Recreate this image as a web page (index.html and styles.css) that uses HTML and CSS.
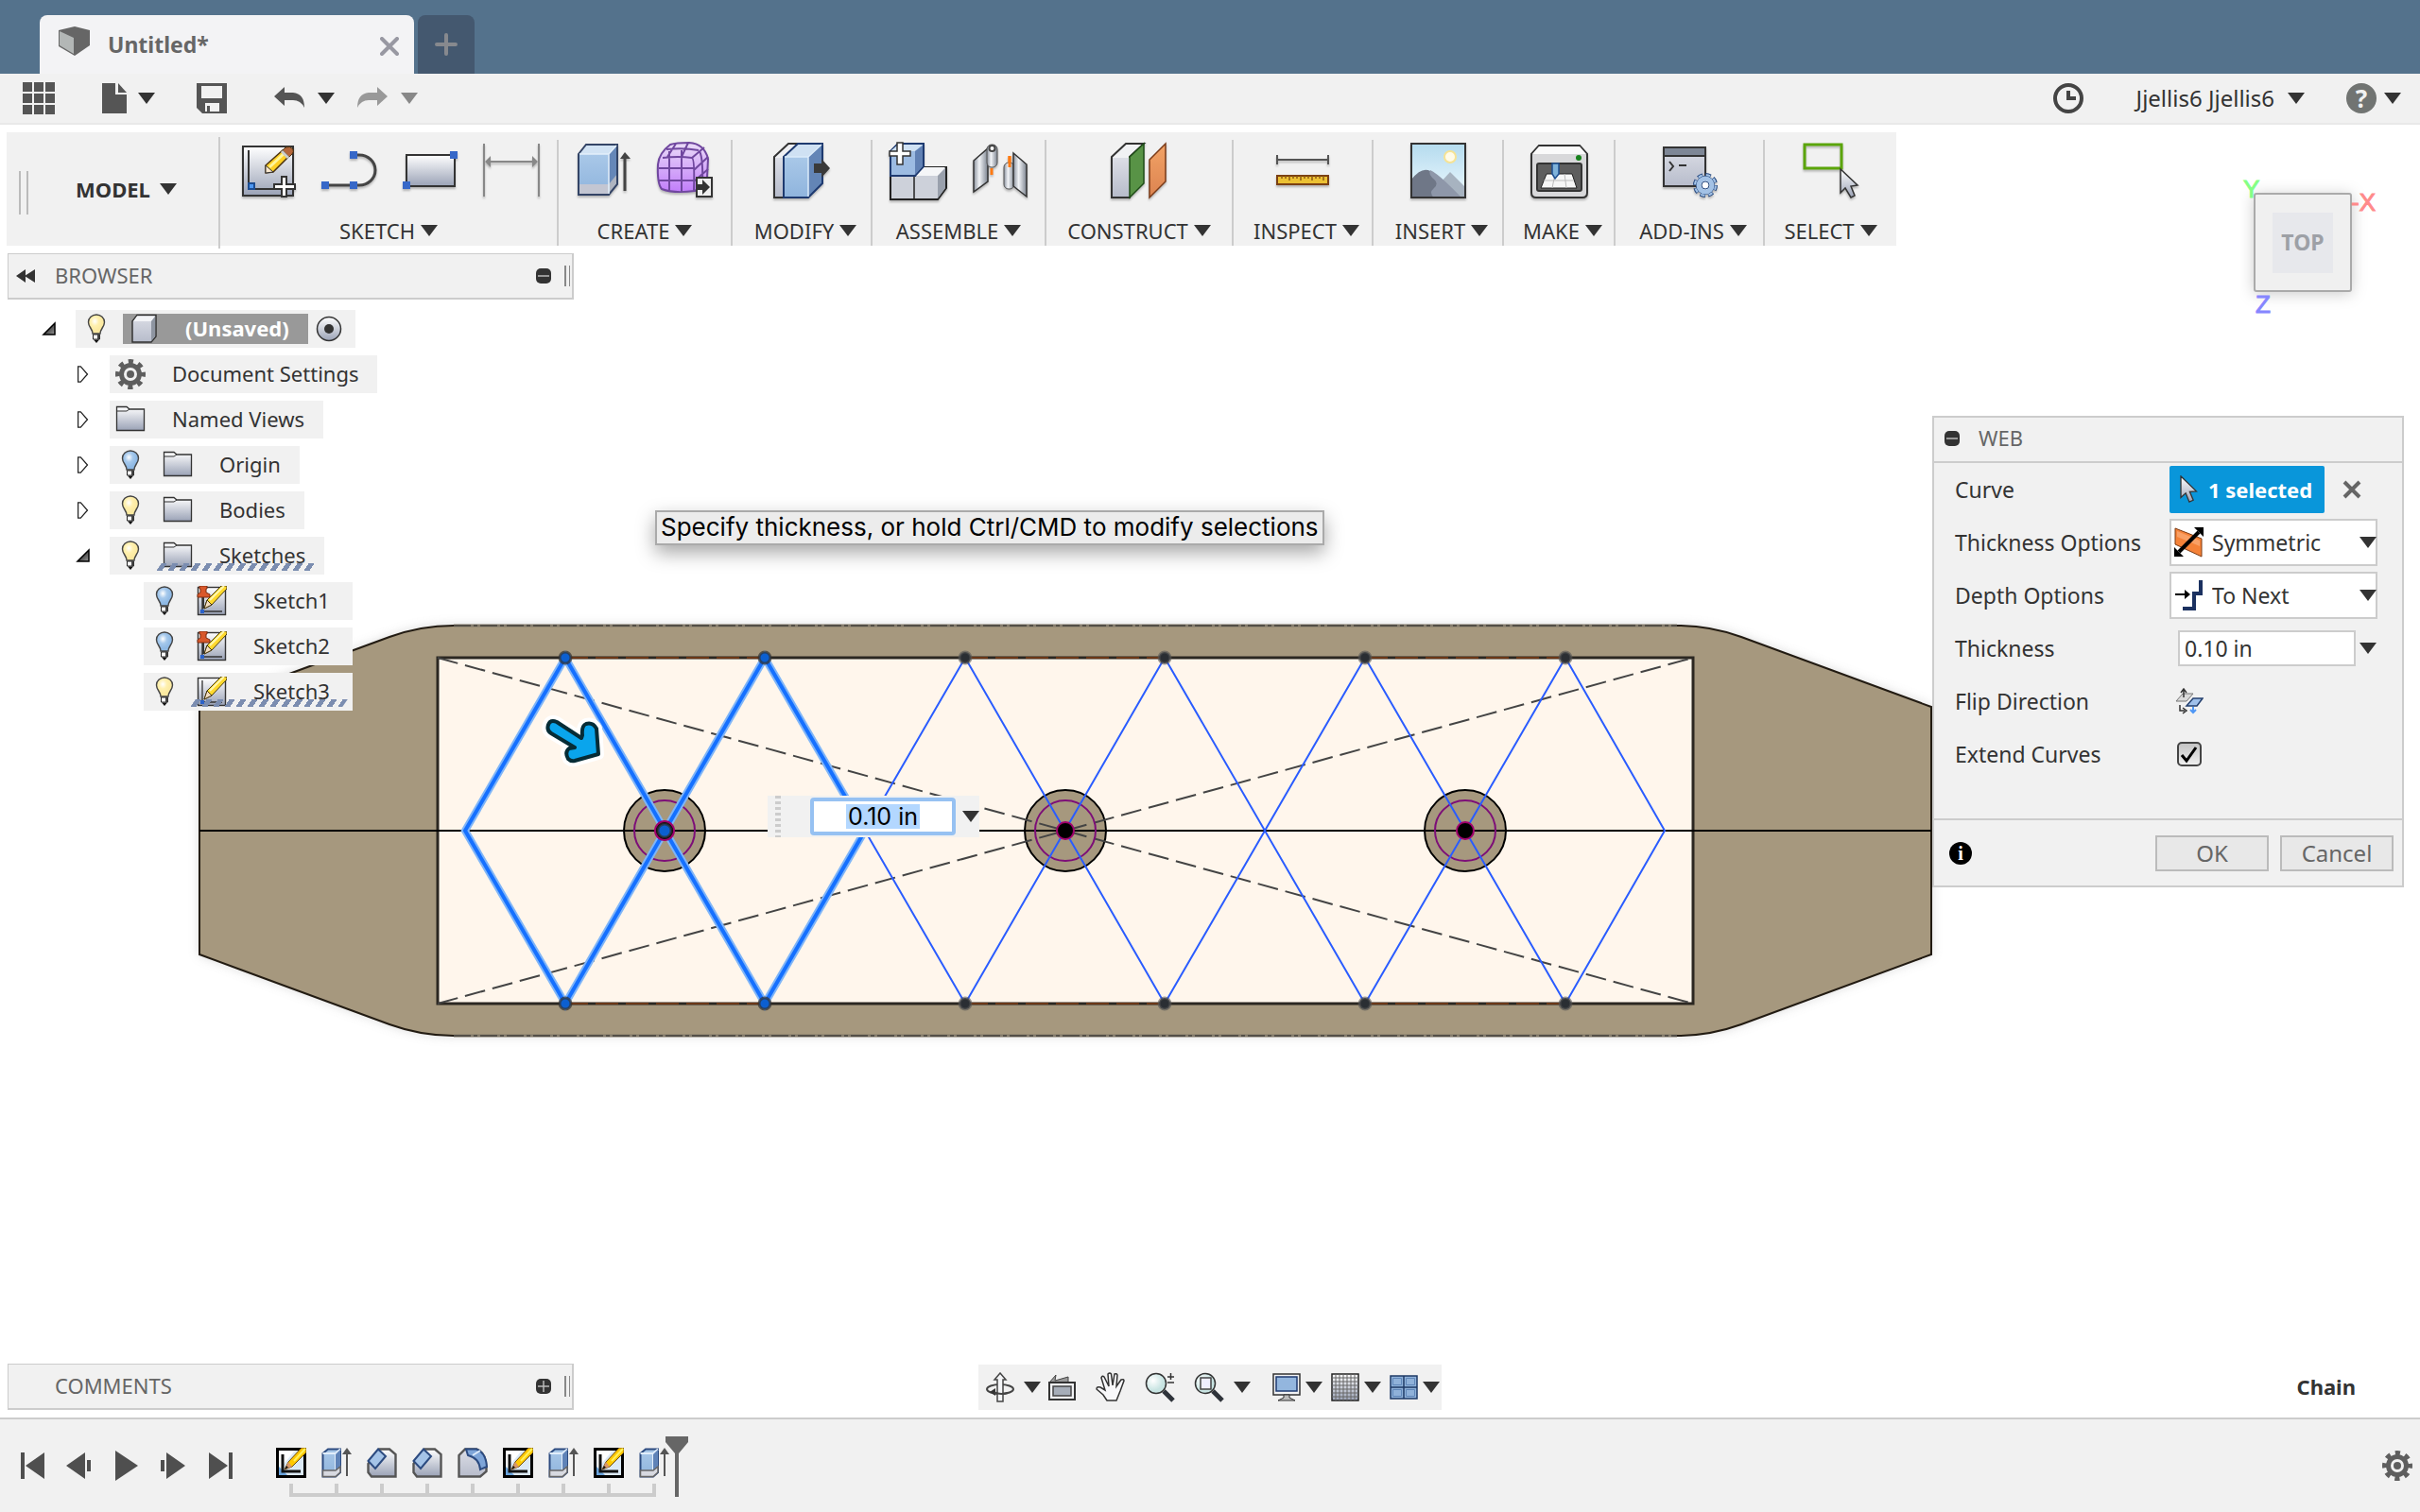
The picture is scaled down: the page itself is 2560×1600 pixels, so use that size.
FILE: index.html
```html
<!DOCTYPE html>
<html lang="en">
<head>
  <meta charset="UTF-8" />
  <meta name="viewport" content="width=device-width, initial-scale=1.0" />
  <title>Untitled*</title>
  <link rel="stylesheet" href="styles.css">
</head>
<body>
  <!-- shared gradients and symbols -->
  <svg class="sprite" aria-hidden="true">
    <defs>
      <linearGradient id="steel" x1="0" y1="0" x2="0" y2="1"><stop offset="0" stop-color="#fff"/><stop offset="1" stop-color="#9aa2b6"/></linearGradient>
      <linearGradient id="silver" x1="0" y1="0" x2="0" y2="1"><stop offset="0" stop-color="#dcdee6"/><stop offset="1" stop-color="#b7bccb"/></linearGradient>
      <linearGradient id="metal" x1="0" y1="0" x2="1" y2="0"><stop offset="0" stop-color="#8b929e"/><stop offset=".4" stop-color="#f2f4f7"/><stop offset="1" stop-color="#7c8490"/></linearGradient>
      <linearGradient id="blue" x1="0" y1="0" x2="0" y2="1"><stop offset="0" stop-color="#a9c8e8"/><stop offset="1" stop-color="#8fb4dd"/></linearGradient>
      <linearGradient id="sky" x1="0" y1="0" x2="0" y2="1"><stop offset="0" stop-color="#b4dbee"/><stop offset="1" stop-color="#eef9ff"/></linearGradient>
      <linearGradient id="violet" x1="0" y1="0" x2="0" y2="1"><stop offset="0" stop-color="#eadcf8"/><stop offset="1" stop-color="#c17dfa"/></linearGradient>
      <linearGradient id="orange" x1="0" y1="0" x2="0" y2="1"><stop offset="0" stop-color="#f2a366"/><stop offset="1" stop-color="#dc8350"/></linearGradient>
      <linearGradient id="corner" x1="0" y1="0" x2="1" y2="1"><stop offset="0" stop-color="#000"/><stop offset="1" stop-color="#999"/></linearGradient>
      <radialGradient id="glowOn" cx=".4" cy=".35"><stop offset="0" stop-color="#fff"/><stop offset=".5" stop-color="#fff0ae"/><stop offset="1" stop-color="#fbe9a0"/></radialGradient>
      <radialGradient id="glowOff" cx=".4" cy=".35"><stop offset="0" stop-color="#fff"/><stop offset=".5" stop-color="#a6c9ec"/><stop offset="1" stop-color="#8fb9e4"/></radialGradient>
      <radialGradient id="lens" cx=".35" cy=".35"><stop offset="0" stop-color="#fff"/><stop offset="1" stop-color="#c8e4e2"/></radialGradient>
    </defs>
    <symbol id="caret" viewBox="0 0 18 12"><path d="M0 0H18L9 12Z" fill="currentColor"/></symbol>
    <symbol id="gear" viewBox="0 0 32 32">
      <circle cx="16" cy="16" r="13.5" fill="none" stroke="#5e5e5e" stroke-width="5" stroke-dasharray="5.2 5.4" stroke-dashoffset="2.6"/>
      <circle cx="16" cy="16" r="9.5" fill="none" stroke="#5e5e5e" stroke-width="5"/>
      <circle cx="16" cy="16" r="4" fill="#5e5e5e"/>
    </symbol>
    <symbol id="bulb-on" viewBox="0 0 32 32">
      <path d="M12 21C12 16 7.500 14 7.500 9A8.500 8 0 0 1 24.500 9C24.500 14 20 16 20 21Z" fill="url(#glowOn)" stroke="#444" stroke-width="1.400"/>
      <path d="M12.500 22H19.500V27H12.500Z" fill="#fff" stroke="#222"/><path d="M17 22H19.500V27H17Z" fill="#444"/><path d="M13 27.500H19L16 31Z" fill="#111"/>
    </symbol>
    <symbol id="bulb-off" viewBox="0 0 32 32">
      <path d="M12 21C12 16 7.500 14 7.500 9A8.500 8 0 0 1 24.500 9C24.500 14 20 16 20 21Z" fill="url(#glowOff)" stroke="#444" stroke-width="1.400"/>
      <path d="M12.500 22H19.500V27H12.500Z" fill="#fff" stroke="#222"/><path d="M17 22H19.500V27H17Z" fill="#444"/><path d="M13 27.500H19L16 31Z" fill="#111"/>
    </symbol>
    <symbol id="folder" viewBox="0 0 32 32">
      <path d="M1.500 6V2.500H12L15 5H30.500V27.500H1.500Z" fill="url(#steel)" stroke="#333" stroke-width="1.300"/>
      <path d="M2 7H12L15 5" fill="none" stroke="#333"/>
    </symbol>
    <symbol id="pencil-page" viewBox="0 0 32 32">
      <rect x="1.500" y="1.500" width="29" height="29" fill="url(#steel)" stroke="#333" stroke-width="1.400"/>
      <path d="M6 4V27H27" fill="none" stroke="#333" stroke-width="1.300"/><rect x="4" y="25" width="4" height="4" fill="#2b62c9"/>
      <path d="M8 24L11 15L26 0H32V3L16 20Z" fill="#ffd92e" stroke="#4a3a10"/><path d="M8 24L11 15L16 20Z" fill="#f3ddc0" stroke="#4a3a10"/><path d="M14 15L29 0" stroke="#fff7b0" stroke-width="2"/>
    </symbol>
    <symbol id="pin-page" viewBox="0 0 32 32">
      <use href="#pencil-page"/>
      <path d="M7 12V24" stroke="#333" stroke-width="2"/>
      <path d="M3 0H11V3H10V7L14 9V12H1V9L4 7V3H3Z" fill="#d9582b" stroke="#7c2c10"/>
    </symbol>
    <symbol id="minus" viewBox="0 0 16 16"><rect width="16" height="16" rx="5" fill="#333"/><path d="M2 8H14" stroke="#bbb" stroke-width="1.500"/></symbol>
    <symbol id="plus" viewBox="0 0 16 16"><rect width="16" height="16" rx="5" fill="#333"/><path d="M2 8H14M8 2V14" stroke="#bbb" stroke-width="1.500"/></symbol>
    <symbol id="closed" viewBox="0 0 14 20"><path d="M1 1H4L12 10L4 19H1Z" fill="#fff" stroke="#222" stroke-width="1.400"/></symbol>
    <symbol id="open" viewBox="-2 -2 18 18"><path d="M1 13L13 1V13Z" fill="url(#corner)" stroke="#000" stroke-width="1.500"/></symbol>
    <symbol id="cursor" viewBox="0 0 20 32"><path d="M1.500 1V25L7 20L11 30L15.500 28L11.500 18.500L19 18Z" fill="url(#steel)" stroke="#333" stroke-width="1.400"/></symbol>
    <symbol id="step-sketch" viewBox="0 0 32 32">
      <rect x="1.500" y="1.500" width="29" height="29" fill="#dbe9f6" stroke="#000" stroke-width="3"/><path d="M3 3H20L4 22Z" fill="#fff"/><path d="M3 20L12 29H3Z" fill="#6aa4dd"/>
      <path d="M7 7V25H26" fill="none" stroke="#111" stroke-width="3"/>
      <path d="M9 23L13 15L27 0H32V5L17 20Z" fill="#ffc800" stroke="#6b4a10"/><path d="M9 23L13 15L17 20Z" fill="#d9976a"/><path d="M9 23L11 19L13 21Z" fill="#111"/><path d="M19 14L31 1" stroke="#fff15c" stroke-width="2"/>
    </symbol>
    <symbol id="step-extrude" viewBox="0 0 32 32">
      <path d="M1.500 6L7 1.500H20V26L15 30.500H1.500Z" fill="url(#blue)" stroke="#2c4b80" stroke-width="2"/><path d="M1.500 6H15V30M15 6L20 1.500" fill="none" stroke="#e2eefb" stroke-width="2"/>
      <path d="M15 7L20 2V22L15 26Z" fill="#5f83b8"/><path d="M1.500 24H15L20 20V26L15 30.500H1.500Z" fill="#d7d9e0" stroke="#666" stroke-width="1.500"/>
      <path d="M27 30V3" stroke="#555" stroke-width="2"/><path d="M22 7L27 0L32 7Z" fill="#555"/>
    </symbol>
    <symbol id="step-chamfer" viewBox="0 0 32 32">
      <path d="M1.500 17L13 1.500H24L30.500 7V30.500H5L1.500 26Z" fill="url(#steel)" stroke="#555" stroke-width="2.400"/>
      <path d="M1.500 14L12 1.500L20 9L9 22Z" fill="#a5c4e8" stroke="#2c4b80" stroke-width="2"/>
    </symbol>
    <symbol id="step-fillet" viewBox="0 0 32 32">
      <path d="M1.500 8L8 1.500H20Q30 5 30.500 20V25L24 30.500H1.500Z" fill="url(#silver)" stroke="#555" stroke-width="2.400"/>
      <path d="M9 1.500H20Q30 5 31 20L24 23Q23 11 11 8Z" fill="#7ea5d8" stroke="#2c4b80" stroke-width="2"/><path d="M16 8L24 3" stroke="#dcebfb" stroke-width="2"/>
    </symbol>
  </svg>

  <header class="tabbar">
    <div class="tab">
      <svg class="tab-cube" width="34" height="32" viewBox="0 0 34 32"><path d="M0 4L17 0L33 4V20L17 31L0 21Z" fill="#666"/><path d="M1 5L16 12V29L1 20Z" fill="#b3b7b6"/></svg>
      <span class="tab-name">Untitled*</span>
      <button class="tab-close" aria-label="Close tab"><svg width="20" height="20" viewBox="0 0 20 20"><path d="M2 2L18 18M18 2L2 18" stroke="#9898a2" stroke-width="4" stroke-linecap="round"/></svg></button>
    </div>
    <button class="tab-new" aria-label="New tab"><svg width="24" height="24" viewBox="0 0 24 24"><path d="M12 2V22M2 12H22" stroke="#87898e" stroke-width="4" stroke-linecap="round"/></svg></button>
  </header>

  <nav class="quickbar">
    <button aria-label="Data panel"><svg width="34" height="34" viewBox="0 0 34 34"><path d="M0 0h10v10H0zM12 0h10v10H12zM24 0h10v10H24zM0 12h10v10H0zM12 12h10v10H12zM24 12h10v10H24zM0 24h10v10H0zM12 24h10v10H12zM24 24h10v10H24z" fill="#555"/></svg></button>
    <button class="quick-file" aria-label="File"><svg width="26" height="32" viewBox="0 0 26 32"><path d="M0 0H14V12H26V32H0Z" fill="#555"/><path d="M17 0L26 10H17Z" fill="#555"/></svg><svg class="caret"><use href="#caret"/></svg></button>
    <button class="quick-save" aria-label="Save"><svg width="32" height="32" viewBox="0 0 32 32"><path d="M0 0H32V32H6L0 26Z" fill="#555"/><path d="M5 3H27V16H5ZM9 21H24V30H9Z" fill="#f1f1f1"/><path d="M11 24H14V30H11Z" fill="#555"/></svg></button>
    <button class="quick-undo" aria-label="Undo"><svg width="32" height="24" viewBox="0 0 32 24"><path d="M0 10L11 0V6H20Q32 7 32 22Q28 14 20 14H11V20Z" fill="#555"/></svg><svg class="caret"><use href="#caret"/></svg></button>
    <button class="quick-redo" aria-label="Redo"><svg width="32" height="24" viewBox="0 0 32 24"><path d="M32 10L21 0V6H12Q0 7 0 22Q4 14 12 14H21V20Z" fill="#999"/></svg><svg class="caret"><use href="#caret"/></svg></button>
    <div class="account">
      <button aria-label="Job status"><svg width="32" height="32" viewBox="0 0 32 32"><circle cx="16" cy="16" r="14" fill="none" stroke="#444" stroke-width="4"/><path d="M16 8V16H24" fill="none" stroke="#444" stroke-width="4"/></svg></button>
      <button class="user">Jjellis6 Jjellis6 <svg class="caret"><use href="#caret"/></svg></button>
      <button class="help" aria-label="Help"><span class="help-mark">?</span><svg class="caret"><use href="#caret"/></svg></button>
    </div>
  </nav>

  <main class="workspace">
    <!-- sketch and body on the canvas -->
    <svg class="drawing" viewBox="0 132 2560 1368" aria-hidden="true">
      <defs>
        <filter id="soft" x="-5%" y="-10%" width="110%" height="120%"><feGaussianBlur stdDeviation="6"/></filter>
        <path id="plate" d="M211 748L412 674Q445 662 480 662H1774Q1809 662 1842 674L2043 748V1010L1842 1084Q1809 1096 1774 1096H480Q445 1096 412 1084L211 1010Z"/>
        <path id="chain" d="M492 879L598 696L809 1062L915 879L809 696L598 1062Z"/>
        <path id="flow-arrow" d="M589 764Q582 761 580 767Q578 773 583 776L608 791L602 792Q597 796 601 803Q604 806 608 805L633 798L631 771Q627 764 620 766Q615 768 616 778L615 781Z"/>
      </defs>
      <use href="#plate" fill="#999" opacity=".4" filter="url(#soft)"/>
      <use href="#plate" fill="#a6987e" stroke="#221b12" stroke-width="2"/>
      <path d="M480 662H1774M480 1096H1774" stroke="#857c6c" stroke-width="3"/>
      <path d="M480 662H1774M480 1096H1774" stroke="#222" stroke-width="1" stroke-dasharray="18 3 4 3"/>
      <rect x="463" y="696" width="1328" height="366" fill="#fff6ec" stroke="#2b2721" stroke-width="3"/>
      <path d="M598 696H809M1021 696H1232M1444 696H1656M598 1062H809M1021 1062H1232M1444 1062H1656" stroke="#6b3717" stroke-width="2" stroke-dasharray="24 8"/>
      <g fill="#a6987e" stroke="#000" stroke-width="2">
        <circle cx="703" cy="879" r="43"/><circle cx="1127" cy="879" r="43"/><circle cx="1550" cy="879" r="43"/>
      </g>
      <path d="M463 696L1791 1062M463 1062L1791 696" stroke="#444" stroke-width="2" stroke-dasharray="22 8"/>
      <path d="M211 879H2043" stroke="#000" stroke-width="2"/>
      <g fill="none" stroke="#7d0e78" stroke-width="2">
        <circle cx="703" cy="879" r="32"/><circle cx="1127" cy="879" r="32"/><circle cx="1550" cy="879" r="32"/>
      </g>
      <path d="M915 879L1021 696L1232 1062L1444 696L1656 1062L1761 879L1656 696L1444 1062L1232 696L1021 1062Z" fill="none" stroke="#2a5cff" stroke-width="2"/>
      <use href="#chain" fill="none" stroke="#7fb5f8" stroke-width="8"/>
      <use href="#chain" fill="none" stroke="#1570ff" stroke-width="4"/>
      <g fill="#000" stroke="#a0006c" stroke-width="2">
        <circle cx="703" cy="879" r="10"/><circle cx="1127" cy="879" r="9"/><circle cx="1550" cy="879" r="9"/>
      </g>
      <g fill="#2a2e33" stroke="#555" stroke-opacity=".6" stroke-width="3">
        <circle cx="1021" cy="696" r="6"/><circle cx="1232" cy="696" r="6"/><circle cx="1444" cy="696" r="6"/><circle cx="1656" cy="696" r="6"/>
        <circle cx="1021" cy="1062" r="6"/><circle cx="1232" cy="1062" r="6"/><circle cx="1444" cy="1062" r="6"/><circle cx="1656" cy="1062" r="6"/>
      </g>
      <g fill="#0c5fd0" stroke="#333" stroke-opacity=".7" stroke-width="3">
        <circle cx="598" cy="696" r="6"/><circle cx="809" cy="696" r="6"/><circle cx="598" cy="1062" r="6"/><circle cx="809" cy="1062" r="6"/><circle cx="703" cy="879" r="7"/>
      </g>
      <use href="#flow-arrow" fill="#fff" stroke="#fff" stroke-width="12" stroke-linejoin="round"/>
      <use href="#flow-arrow" fill="#0aa5ec" stroke="#062c36" stroke-width="4" stroke-linejoin="round"/>
    </svg>

    <section class="toolbar">
      <div class="tool-mode"><span class="tool-grip"></span><button>MODEL <svg class="caret"><use href="#caret"/></svg></button></div>

      <div class="tool-group">
        <div class="tool-icons sketch-icons">
          <svg viewBox="0 0 64 64"><rect x="5" y="7" width="53" height="52" fill="url(#steel)" stroke="#333" stroke-width="2"/><path d="M11 11V52H40" fill="none" stroke="#333" stroke-width="2"/><rect x="11" y="46" width="6" height="6" fill="#4d97f2" stroke="#1c4c91" stroke-width="2"/><path d="M29 35V27L47 11L54 17L37 34Z" fill="#ffcf26" stroke="#4c3310" stroke-width="1.500"/><path d="M33 29L49 14" stroke="#fff59c" stroke-width="3"/><path d="M29 35V27L37 34Z" fill="#fbe8cf" stroke="#333"/><path d="M47 11L50 8Q55 6 58 10Q59 13 57 15L54 18Z" fill="#b5673c" stroke="#4c3310"/><path d="M46 12L53 19" stroke="#ccc" stroke-width="3"/><path d="M46 39H51V47H60V52H51V60H46V52H38V47H46Z" fill="#fff" stroke="#333" stroke-width="2"/></svg>
          <svg viewBox="0 0 64 64"><path d="M6 48H42A17 16 0 0 0 42 16H36" fill="none" stroke="#444" stroke-width="3"/><path d="M2 44h8v8H2zM32 44h8v8H32zM32 12h8v8H32z" fill="#3768c8"/></svg>
          <svg viewBox="0 0 64 64"><rect x="6" y="16" width="51" height="33" fill="url(#steel)" stroke="#333" stroke-width="2"/><path d="M2 44h8v8H2zM52 12h8v8H52z" fill="#3768c8"/></svg>
          <svg viewBox="0 0 64 64"><path d="M2 4V60M60 4V60M4 23H58" stroke="#888" stroke-width="2"/><path d="M3 23L9 17V29ZM59 23L53 17V29Z" fill="#888"/></svg>
        </div>
        <button class="tool-label">SKETCH<svg class="caret"><use href="#caret"/></svg></button>
      </div>

      <div class="tool-group">
        <div class="tool-icons">
          <svg viewBox="0 0 64 64"><path d="M5 15H37V58H5Z" fill="url(#blue)"/><path d="M5 47H37V58H5Z" fill="#c3c6d2"/><path d="M5 15L13 5H46L37 15Z" fill="#d2e3f4"/><path d="M37 15L46 5V47L37 58Z" fill="#6587b8"/><path d="M37 47L46 36V47L37 58Z" fill="#aeb4c0"/><path d="M5 15L13 5H46V47L37 58H5Z" fill="none" stroke="#334466" stroke-width="2"/><path d="M6 15H37V57M37 15L45 6" fill="none" stroke="#e4effa" stroke-width="1.500"/><path d="M54 54V16" stroke="#444" stroke-width="3"/><path d="M49 20L54 13L60 20Z" fill="#444"/></svg>
          <svg viewBox="0 0 64 64"><path d="M3 26Q4 14 16 5Q22 3 36 3Q52 4 56 20L55 40Q50 50 42 54Q20 57 7 52Q2 46 3 26Z" fill="url(#violet)" stroke="#70479f" stroke-width="2"/><path d="M15 12V54M28 11V55M4 30H41M4 43H41M8 19Q25 17 39 19Q42 20 41 54M39 19L52 8M41 32L56 18M41 44L56 31M47 12Q51 20 50 48M12 10Q30 8 46 11M22 4L13 18M35 3L28 18" fill="none" stroke="#70479f" stroke-width="2"/><rect x="44" y="40" width="16" height="20" fill="#efefef" stroke="#333" stroke-width="2"/><path d="M44 47H50V42L58 50L50 58V53H44Z" fill="#333"/></svg>
        </div>
        <button class="tool-label">CREATE<svg class="caret"><use href="#caret"/></svg></button>
      </div>

      <div class="tool-group">
        <div class="tool-icons">
          <svg viewBox="0 0 64 64"><path d="M3 18L18 4H30L14 18V61H3Z" fill="#eff0f3" stroke="#333" stroke-width="2"/><path d="M4 19H13V60H4Z" fill="url(#silver)"/><path d="M13 18H39V61H13Z" fill="url(#blue)"/><path d="M13 18L28 4H54L39 18Z" fill="#cfe1f3"/><path d="M39 18L54 4V46L39 61Z" fill="#6385b6"/><path d="M13 18L28 4H54V46L39 61H13Z" fill="none" stroke="#1e3a70" stroke-width="2"/><path d="M14 18H39V60M39 18L53 5" fill="none" stroke="#dcebfa" stroke-width="1.500"/><path d="M45 25H53V20L62 30L53 40V35H45Z" fill="#3a3a3a"/></svg>
        </div>
        <button class="tool-label shifted">MODIFY<svg class="caret"><use href="#caret"/></svg></button>
      </div>

      <div class="tool-group">
        <div class="tool-icons">
          <svg viewBox="0 0 64 64"><path d="M29 38L38 29H62V51L53 63H3V38Z" fill="#cdd1da" stroke="#222" stroke-width="2"/><path d="M29 38L38 29H61L53 38Z" fill="#f5f6f8"/><path d="M53 38L61 30V51L53 62Z" fill="#99a0ac"/><path d="M28 38V63" stroke="#222" stroke-width="1.500"/><path d="M3 12L11 4H38V28L29 38H3Z" fill="#9cbbe2" stroke="#1e3a70" stroke-width="2"/><path d="M4 11L11 5H37L29 12H4Z" fill="#cfe1f3"/><path d="M29 12L37 6V28L29 37Z" fill="#6181b4"/><path d="M10 3H16V12H24V17H16V26H10V17H2V12H10Z" fill="#fff" stroke="#333" stroke-width="1.500"/></svg>
          <svg viewBox="0 0 64 64"><path d="M5 22L20 9V44L5 55Z" fill="url(#metal)" stroke="#333" stroke-width="1.500"/><rect x="19" y="5" width="11" height="24" rx="5" fill="url(#metal)" stroke="#555"/><circle cx="24.500" cy="9" r="3" fill="#fff" stroke="#444" stroke-width="2"/><path d="M24 30V37M43 17V28" stroke="#ff7a12" stroke-width="3"/><rect x="37" y="24" width="11" height="28" rx="5" fill="url(#metal)" stroke="#555"/><path d="M43 17V29" stroke="#ff7a12" stroke-width="3"/><path d="M47 14L61 26V60L47 49Z" fill="url(#metal)" stroke="#333" stroke-width="1.500"/></svg>
        </div>
        <button class="tool-label">ASSEMBLE<svg class="caret"><use href="#caret"/></svg></button>
      </div>

      <div class="tool-group">
        <div class="tool-icons">
          <svg viewBox="0 0 64 64"><path d="M3 18L18 4H37L22 18V61H3Z" fill="#f1f2f4" stroke="#333" stroke-width="2"/><path d="M4 19H22V60H4Z" fill="url(#silver)"/><path d="M22 18L37 4V46L22 61Z" fill="#589346" stroke="#1f4d18" stroke-width="1.500"/><path d="M43 21L60 4V44L43 61Z" fill="url(#orange)" stroke="#7b3b18" stroke-width="1.500"/></svg>
        </div>
        <button class="tool-label">CONSTRUCT<svg class="caret"><use href="#caret"/></svg></button>
      </div>

      <div class="tool-group">
        <div class="tool-icons">
          <svg viewBox="0 0 64 64"><path d="M5 16V26M59 16V26M5 21H59" stroke="#555" stroke-width="2"/><rect x="5" y="38" width="54" height="9" fill="#ecc133" stroke="#7b4013" stroke-width="2"/><path d="M10 38V41M14 38V41M18 38V43M22 38V41M26 38V41M30 38V43M34 38V41M38 38V41M42 38V43M46 38V41M50 38V41M54 38V43" stroke="#8d5a15" stroke-width="1.500"/></svg>
        </div>
        <button class="tool-label shifted">INSPECT<svg class="caret"><use href="#caret"/></svg></button>
      </div>

      <div class="tool-group">
        <div class="tool-icons">
          <svg viewBox="0 0 64 64"><rect x="4" y="4" width="57" height="57" fill="url(#sky)"/><circle cx="45" cy="18" r="6" fill="#fffbe8" stroke="#f6e394" stroke-width="2"/><path d="M34 46L45 34L61 50V61H50Z" fill="#a7b3c0"/><path d="M4 42Q15 28 24 33Q32 37 56 61H4Z" fill="#6f7787"/><path d="M24 32Q33 36 57 61H28Q22 56 28 51Q34 46 26 40Q22 36 24 32Z" fill="#8e97a9"/><rect x="4" y="4" width="57" height="57" fill="none" stroke="#333" stroke-width="2"/></svg>
        </div>
        <button class="tool-label shifted">INSERT<svg class="caret"><use href="#caret"/></svg></button>
      </div>

      <div class="tool-group">
        <div class="tool-icons">
          <svg viewBox="0 0 64 64"><path d="M3 15L11 6H54L62 15V56Q62 61 57 61H8Q3 61 3 56Z" fill="#d8d8da" stroke="#333" stroke-width="2"/><path d="M4 15L11 7H54L61 15Z" fill="#fafafa"/><circle cx="53" cy="19" r="3" fill="#17821c"/><rect x="9" y="25" width="47" height="29" rx="2" fill="#5e5e5e" stroke="#333" stroke-width="2"/><path d="M19 36H46L51 51H13Z" fill="#f6f6f6" stroke="#222"/><path d="M16 43H48M28 36L25 51M38 36L40 51" stroke="#bbb"/><path d="M25 25H32V36L28 41L25 36Z" fill="#7fb2da" stroke="#1d4d90" stroke-width="1.500"/></svg>
        </div>
        <button class="tool-label shifted">MAKE<svg class="caret"><use href="#caret"/></svg></button>
      </div>

      <div class="tool-group">
        <div class="tool-icons">
          <svg viewBox="0 0 64 64"><rect x="5" y="8" width="44" height="41" fill="url(#silver)" stroke="#333" stroke-width="2"/><path d="M6 9H48V16H6Z" fill="#7e8796"/><path d="M5 17H49" stroke="#333" stroke-width="2"/><path d="M11 23L15 28L11 33M21 27H29" fill="none" stroke="#333" stroke-width="2"/><circle cx="49" cy="48" r="10" fill="none" stroke="#24477e" stroke-width="6" stroke-dasharray="5 2.850"/><circle cx="49" cy="48" r="10" fill="none" stroke="#a3c2e6" stroke-width="4" stroke-dasharray="4 3.850" stroke-dashoffset="-.5"/><circle cx="49" cy="48" r="7" fill="#fff" stroke="#24477e" stroke-width="6"/><circle cx="49" cy="48" r="7" fill="#fff" stroke="#a3c2e6" stroke-width="5"/><circle cx="49" cy="48" r="4" fill="#fff" stroke="#24477e"/></svg>
        </div>
        <button class="tool-label shifted">ADD-INS<svg class="caret"><use href="#caret"/></svg></button>
      </div>

      <div class="tool-group">
        <div class="tool-icons">
          <svg viewBox="0 0 64 64"><rect x="4" y="5" width="39" height="25" fill="none" stroke="#5ba50a" stroke-width="3"/><path d="M42 31V56L47 51L53 61L57 59L53 49L60 48Z" fill="url(#steel)" stroke="#333" stroke-width="1.500"/></svg>
        </div>
        <button class="tool-label">SELECT<svg class="caret"><use href="#caret"/></svg></button>
      </div>
    </section>

    <div class="panels">
      <aside class="browser">
        <div class="panel-bar">
          <svg class="collapse" width="20" height="14" viewBox="0 0 20 14"><path d="M10 0V14L0 7ZM20 0V14L9 7Z" fill="#333"/></svg>
          <h2>BROWSER</h2>
          <svg class="bar-icon"><use href="#minus"/></svg><span class="bar-grip"></span>
        </div>
        <ul class="tree">
          <li>
            <div class="node"><svg class="twist"><use href="#open"/></svg>
              <div class="node-box"><svg class="ico"><use href="#bulb-on"/></svg>
                <span class="node-root"><svg class="ico" viewBox="0 0 32 32"><path d="M4 8L9 1.500H29V24L24 30H4Z" fill="url(#silver)" stroke="#333" stroke-width="1.500"/><path d="M5 8L9 2.500H28L24 8Z" fill="#f3f4f7"/><path d="M24 8L28 3V24L24 29Z" fill="#8e95a1"/></svg><span class="node-name">(Unsaved)</span></span>
                <svg class="ico" viewBox="0 0 32 32"><circle cx="16" cy="16" r="12.500" fill="url(#steel)" stroke="#333" stroke-width="1.500"/><circle cx="16" cy="16" r="5" fill="#333"/></svg>
              </div>
            </div>
            <ul>
              <li><div class="node"><svg class="twist"><use href="#closed"/></svg><div class="node-box"><svg class="ico"><use href="#gear"/></svg><span class="node-name">Document Settings</span></div></div></li>
              <li><div class="node"><svg class="twist"><use href="#closed"/></svg><div class="node-box"><svg class="ico"><use href="#folder"/></svg><span class="node-name">Named Views</span></div></div></li>
              <li><div class="node"><svg class="twist"><use href="#closed"/></svg><div class="node-box"><svg class="ico"><use href="#bulb-off"/></svg><svg class="ico"><use href="#folder"/></svg><span class="node-name">Origin</span></div></div></li>
              <li><div class="node"><svg class="twist"><use href="#closed"/></svg><div class="node-box"><svg class="ico"><use href="#bulb-on"/></svg><svg class="ico"><use href="#folder"/></svg><span class="node-name">Bodies</span></div></div></li>
              <li>
                <div class="node"><svg class="twist"><use href="#open"/></svg><div class="node-box active"><svg class="ico"><use href="#bulb-on"/></svg><svg class="ico"><use href="#folder"/></svg><span class="node-name">Sketches</span></div></div>
                <ul class="sketches">
                  <li><div class="node"><span class="twist"></span><div class="node-box"><svg class="ico"><use href="#bulb-off"/></svg><svg class="ico"><use href="#pin-page"/></svg><span class="node-name">Sketch1</span></div></div></li>
                  <li><div class="node"><span class="twist"></span><div class="node-box"><svg class="ico"><use href="#bulb-off"/></svg><svg class="ico"><use href="#pin-page"/></svg><span class="node-name">Sketch2</span></div></div></li>
                  <li><div class="node"><span class="twist"></span><div class="node-box active"><svg class="ico"><use href="#bulb-on"/></svg><svg class="ico"><use href="#pencil-page"/></svg><span class="node-name">Sketch3</span></div></div></li>
                </ul>
              </li>
            </ul>
          </li>
        </ul>
      </aside>

      <form class="dialog">
        <div class="dialog-head"><svg class="bar-icon"><use href="#minus"/></svg><h2>WEB</h2></div>
        <div class="dialog-body">
          <label for="curve">Curve</label>
          <div class="field"><button type="button" class="picked" id="curve"><svg width="20" height="30"><use href="#cursor"/></svg>1 selected</button><button type="button" class="clear" aria-label="Clear selection"><svg width="20" height="20" viewBox="0 0 20 20"><path d="M2 2L18 18M18 2L2 18" stroke="#666" stroke-width="4"/></svg></button></div>
          <label for="thick-opt">Thickness Options</label>
          <div class="field drop">
            <svg class="drop-icon" viewBox="0 0 32 32"><path d="M1 1L29 12V31L1 18Z" fill="#f58238" stroke="#7c3a12"/><path d="M3 4L27 14V20L3 10Z" fill="#fbb483" opacity=".6"/><path d="M5 26L26 5" stroke="#000" stroke-width="4"/><path d="M0 31V21L10 31ZM31 0V10L21 0Z" fill="#000"/></svg>
            <select id="thick-opt"><option>Symmetric</option></select><svg class="caret"><use href="#caret"/></svg>
          </div>
          <label for="depth-opt">Depth Options</label>
          <div class="field drop">
            <svg class="drop-icon" viewBox="0 0 32 32"><path d="M1 15H12" stroke="#000" stroke-width="2"/><path d="M11 10L17 15L11 20Z" fill="#000"/><path d="M9 30H21V14H28V0" fill="none" stroke="#1b3160" stroke-width="4"/></svg>
            <select id="depth-opt"><option>To Next</option></select><svg class="caret"><use href="#caret"/></svg>
          </div>
          <label for="thickness">Thickness</label>
          <div class="field"><input type="text" id="thickness" value="0.10 in"><svg class="caret"><use href="#caret"/></svg></div>
          <label for="flip">Flip Direction</label>
          <div class="field"><button type="button" class="flip" id="flip" aria-label="Flip Direction"><svg width="30" height="28" viewBox="0 0 30 28"><path d="M1 14L8 6H19L12 14Z" fill="#dadada" stroke="#777"/><path d="M9 10V2M6 5L9 1L12 5M5 18V24H10M8 21L12 24L8 27" fill="none" stroke="#333" stroke-width="1.500"/><path d="M12 19L19 11H29L23 19Z" fill="#9fc0ea" stroke="#24406f" stroke-width="1.500"/><path d="M19 20V25M16 23L19 26L22 23" fill="none" stroke="#4f97f5" stroke-width="2"/></svg></button></div>
          <label for="extend">Extend Curves</label>
          <div class="field"><span class="check"><input type="checkbox" id="extend" checked><svg viewBox="0 0 26 26"><path d="M5 14L10 20L20 6" fill="none" stroke="#000" stroke-width="3"/></svg></span></div>
        </div>
        <div class="dialog-foot">
          <span class="info">i</span>
          <button type="button">OK</button><button type="button">Cancel</button>
        </div>
      </form>
    </div>

    <div class="bottom">
      <div class="panel-bar comments"><h2>COMMENTS</h2><svg class="bar-icon"><use href="#plus"/></svg><span class="bar-grip"></span></div>
      <div class="navbar">
        <button aria-label="Orbit"><svg class="ico" viewBox="0 0 32 32"><ellipse cx="16" cy="18" rx="14" ry="5" fill="none" stroke="#444" stroke-width="2"/><path d="M13 31V8H10L16 1L22 8H19V31Z" fill="#f4f5f7" stroke="#444" stroke-width="1.500"/><path d="M5 21L11 17V25Z" fill="#333"/><path d="M10 21.500Q16 24 24 22" fill="none" stroke="#444" stroke-width="2"/></svg><svg class="caret"><use href="#caret"/></svg></button>
        <button aria-label="Look at"><svg class="ico" viewBox="0 0 32 32"><path d="M3 11L10 3L9 9L23 5V11Z" fill="#999" stroke="#444"/><rect x="3" y="11" width="27" height="18" fill="#f1f2f4" stroke="#333" stroke-width="2"/><rect x="7" y="15" width="19" height="10" fill="#a6adb8" stroke="#444" stroke-width="1.500"/></svg></button>
        <button aria-label="Pan"><svg class="ico" viewBox="0 0 32 32"><path d="M12 30L8 24L1 18Q1 15 5 16L10 19L6 6Q7 3 9 5L14 15L13 2Q15 0 16.500 2L18 14L20 2Q22 1 23 3L22 15L27 8Q30 7 30 9L26 20L22 30Z" fill="#f8f8fa" stroke="#333" stroke-width="1.500"/></svg></button>
        <button aria-label="Zoom"><svg class="ico" viewBox="0 0 32 32"><path d="M20 20L30 30" stroke="#2e333a" stroke-width="5"/><circle cx="12" cy="12" r="10.500" fill="url(#lens)" stroke="#333" stroke-width="1.500"/><path d="M24 5H31M27.500 1V8M24 11H31" stroke="#333" stroke-width="1.500"/></svg></button>
        <button class="nav-fit" aria-label="Fit"><svg class="ico" viewBox="0 0 32 32"><path d="M20 20L30 30" stroke="#2e333a" stroke-width="5"/><circle cx="12" cy="12" r="10.500" fill="url(#lens)" stroke="#333" stroke-width="1.500"/><rect x="7" y="6" width="11" height="12" fill="#eef" stroke="#444" stroke-width="1.500"/></svg><svg class="caret"><use href="#caret"/></svg></button>
        <button class="tight" aria-label="Display settings"><svg class="ico" viewBox="0 0 32 32"><rect x="2" y="2" width="28" height="22" fill="#f2f3f5" stroke="#333" stroke-width="1.500"/><rect x="5" y="5" width="22" height="15" fill="#93b6de" stroke="#1e3a70" stroke-width="1.500"/><path d="M13 24H19V27L25 30H7L13 27Z" fill="#bbb" stroke="#333"/></svg><svg class="caret"><use href="#caret"/></svg></button>
        <button class="tight" aria-label="Grid and snaps"><svg class="ico" viewBox="0 0 32 32"><rect x="2" y="2" width="28" height="28" fill="url(#steel)" stroke="#222" stroke-width="1.500"/><path d="M2 6H30M2 10H30M2 14H30M2 18H30M2 22H30M2 26H30M6 2V30M10 2V30M14 2V30M18 2V30M22 2V30M26 2V30" stroke="#666"/></svg><svg class="caret"><use href="#caret"/></svg></button>
        <button class="tight" aria-label="Viewports"><svg class="ico" viewBox="0 0 32 32"><rect x="2" y="4" width="28" height="24" fill="#8fb1d9" stroke="#1e3a66" stroke-width="1.500"/><path d="M16 4V28M2 16H30" stroke="#1e3a66" stroke-width="1.500"/><path d="M4.500 6.500H13.500V13.500H4.500ZM18.500 6.500H27.500V13.500H18.500ZM4.500 18.500H13.500V25.500H4.500ZM18.500 18.500H27.500V25.500H18.500Z" fill="none" stroke="#5f86b8"/></svg><svg class="caret"><use href="#caret"/></svg></button>
      </div>
      <p class="hint">Chain</p>
    </div>

    <svg class="viewcube" viewBox="0 0 160 160">
      <rect x="15" y="21" width="102" height="103" rx="2" fill="#f0f0f0" stroke="#aaa" stroke-width="2"/>
      <rect x="34" y="41" width="64" height="64" fill="#e7e8ec"/>
      <text x="66" y="81" class="cube-face">TOP</text>
      <text x="3" y="25" class="axis axis-y">Y</text><text x="117" y="39" class="axis axis-x">-X</text><text x="16" y="147" class="axis axis-z">Z</text>
    </svg>

    <div class="tooltip">Specify thickness, or hold Ctrl/CMD to modify selections</div>
    <div class="value-box"><span class="value-grip"></span><input type="text" value="0.10 in" aria-label="Thickness"><svg class="caret"><use href="#caret"/></svg></div>
  </main>

  <footer class="timeline">
    <div class="playback">
      <button aria-label="Go to start"><svg viewBox="0 0 28 32"><path d="M2 2H6V30H2ZM27 2V30L7 16Z" fill="#4f4f4f"/></svg></button>
      <button aria-label="Step back"><svg viewBox="0 0 28 32"><path d="M20 2V30L0 16ZM22 10H26V22H22Z" fill="#4f4f4f"/></svg></button>
      <button aria-label="Play"><svg viewBox="0 0 28 32"><path d="M2 0V32L26 16Z" fill="#4f4f4f"/></svg></button>
      <button aria-label="Step forward"><svg viewBox="0 0 28 32"><path d="M6 2V30L26 16ZM0 10H4V22H0Z" fill="#4f4f4f"/></svg></button>
      <button aria-label="Go to end"><svg viewBox="0 0 28 32"><path d="M22 2H26V30H22ZM1 2V30L21 16Z" fill="#4f4f4f"/></svg></button>
    </div>
    <ol class="steps">
      <li><svg class="ico"><use href="#step-sketch"/></svg></li>
      <li><svg class="ico"><use href="#step-extrude"/></svg></li>
      <li><svg class="ico"><use href="#step-chamfer"/></svg></li>
      <li><svg class="ico"><use href="#step-chamfer"/></svg></li>
      <li><svg class="ico"><use href="#step-fillet"/></svg></li>
      <li><svg class="ico"><use href="#step-sketch"/></svg></li>
      <li><svg class="ico"><use href="#step-extrude"/></svg></li>
      <li><svg class="ico"><use href="#step-sketch"/></svg></li>
      <li><svg class="ico"><use href="#step-extrude"/></svg></li>
    </ol>
    <svg class="marker" viewBox="0 0 24 64"><path d="M0 0H24V6L14 18V64H10V18L0 6Z" fill="#666"/></svg>
    <button class="settings" aria-label="Timeline settings"><svg class="ico"><use href="#gear"/></svg></button>
  </footer>
</body>
</html>
```
FILE: styles.css
```css
* {
  box-sizing: border-box;
}
body {
  margin: 0;
  min-height: 100vh;
  display: flex;
  flex-direction: column;
  background: #fff;
  color: #333;
  font: 22px/32px "Noto Sans", "Open Sans", sans-serif;
}
button {
  display: flex;
  align-items: center;
  padding: 0;
  border: 0;
  background: none;
  color: inherit;
  font: inherit;
}
ul, ol, h2, p {
  margin: 0;
  padding: 0;
  list-style: none;
}
h2 {
  padding-bottom: 2px;
  font-size: 22px;
  font-weight: normal;
  color: #666;
}
svg {
  display: block;
  flex: none;
}
.sprite {
  position: absolute;
  width: 0;
  height: 0;
}
.caret {
  width: 18px;
  height: 12px;
  color: #333;
}
.ico {
  width: 32px;
  height: 32px;
}

/* document tabs */
.tabbar {
  display: flex;
  gap: 4px;
  height: 78px;
  padding: 16px 0 0 42px;
  background: #54728c;
}
.tab {
  display: flex;
  align-items: center;
  width: 396px;
  padding: 0 16px 0 20px;
  border-radius: 8px 8px 0 0;
  background: #f3f3f5;
}
.tab-cube {
  margin-bottom: 6px;
}
.tab-name {
  margin-left: 18px;
  font-size: 23px;
  font-weight: bold;
  color: #666;
}
.tab-close {
  margin: 4px 0 0 auto;
}
.tab-new {
  width: 60px;
  justify-content: center;
  border-radius: 8px 8px 0 0;
  background: #44586f;
}

/* quick access bar */
.quickbar {
  display: flex;
  align-items: center;
  height: 54px;
  padding: 0 20px 0 24px;
  border-bottom: 2px solid #e9e9e9;
  background: #f1f1f1;
}
.quickbar button {
  gap: 12px;
}
.quickbar .quick-file {
  margin-left: 50px;
}
.quick-save {
  margin-left: 44px;
}
.quickbar .quick-undo {
  margin-left: 50px;
  gap: 14px;
}
.quickbar .quick-redo {
  margin-left: 24px;
  gap: 14px;
}
.quick-redo .caret {
  color: #888;
}
.account {
  display: flex;
  align-items: center;
  gap: 44px;
  margin-left: auto;
}
.account .user {
  margin-left: 12px;
  gap: 14px;
  font-size: 24px;
}
.account .help {
  gap: 8px;
}
.help-mark {
  width: 32px;
  height: 32px;
  border-radius: 50%;
  background: #717472;
  color: #f1f1f1;
  font-size: 26px;
  font-weight: bold;
}

/* canvas */
.workspace {
  position: relative;
  flex: 1;
  display: flex;
  flex-direction: column;
  padding: 8px 0;
}
.drawing {
  position: absolute;
  top: 0;
  left: 0;
  width: 100%;
  height: 100%;
}
.toolbar, .panels, .bottom {
  position: relative;
}

/* toolbar */
.toolbar {
  display: grid;
  grid-template-columns: 226px 358px 184px 148px 184px 198px 148px 138px 118px 158px 139px;
  width: max-content;
  height: 120px;
  margin-left: 7px;
  background: #f1f1f1;
}
.tool-mode {
  display: flex;
  align-items: center;
  margin: 5px 0;
  padding-left: 13px;
  border-right: 2px solid #ccc;
}
.tool-grip {
  width: 10px;
  height: 46px;
  border: solid #bbb;
  border-width: 0 2px;
}
.tool-mode button {
  gap: 10px;
  margin-left: 50px;
  padding-bottom: 8px;
  font-weight: bold;
}
.tool-group {
  display: flex;
  flex-direction: column;
  align-items: center;
  margin: 8px 0;
  border-right: 2px solid #ccc;
}
.tool-group:last-child {
  border: 0;
}
.tool-icons {
  display: flex;
  gap: 22px;
}
.sketch-icons {
  padding-left: 4px;
}
.tool-icons svg {
  width: 64px;
  height: 64px;
  filter: drop-shadow(0 2px 1px rgba(0, 0, 0, .25));
}
.tool-label {
  gap: 6px;
  margin-top: 16px;
}
.shifted {
  padding-left: 8px;
}

/* browser */
.panels {
  display: flex;
  align-items: flex-start;
  justify-content: space-between;
  margin-top: 8px;
}
.browser {
  width: 599px;
  margin-left: 8px;
}
.panel-bar {
  display: flex;
  align-items: center;
  height: 49px;
  padding: 0 2px 0 8px;
  border: solid #ccc;
  border-width: 1px 2px 2px 1px;
  background: #f1f1f1;
}
.panel-bar h2 {
  margin-left: 21px;
}
.bar-icon {
  width: 16px;
  height: 16px;
}
.panel-bar .bar-icon {
  margin-left: auto;
}
.bar-grip {
  width: 6px;
  height: 22px;
  margin-left: 14px;
  border: solid #888;
  border-width: 0 1px 0 2px;
}
.tree {
  padding: 11px 0 0 30px;
}
.tree ul {
  padding-left: 36px;
}
.node {
  display: flex;
  align-items: center;
  margin-bottom: 8px;
}
.twist {
  width: 28px;
  height: 18px;
  margin-right: 14px;
}
.node-box {
  position: relative;
  display: flex;
  align-items: center;
  gap: 18px;
  height: 40px;
  padding: 0 20px 0 6px;
  background: #f1f1f1;
}
.sketches .node-box {
  padding-right: 24px;
}
.node-name {
  padding: 0 0 2px 10px;
}
.node-root {
  display: flex;
  gap: 18px;
  height: 32px;
  margin: 0 -12px 0 -6px;
  padding: 0 20px 0 6px;
  background: #999;
  color: #fff;
  font-weight: bold;
  line-height: 30px;
}
.node-root + .ico {
  margin-right: -8px;
}
.active::after {
  content: "";
  position: absolute;
  left: 52px;
  right: 8px;
  bottom: 4px;
  height: 8px;
  background: repeating-linear-gradient(90deg, #7b8db0 0 6px, transparent 6px 12px);
  transform: skewX(-35deg);
}

/* web dialog */
.dialog {
  width: 499px;
  margin: 172px 17px 0 0;
  border: 2px solid #ccc;
  background: #f1f1f1;
  font-size: 23px;
}
.dialog-head {
  display: flex;
  align-items: center;
  gap: 20px;
  height: 48px;
  padding: 0 0 2px 11px;
  border-bottom: 2px solid #ccc;
}
.dialog-body {
  display: grid;
  grid-template-columns: 227px 1fr;
  grid-auto-rows: 56px;
  align-items: center;
  padding: 0 0 40px 22px;
}
.field {
  display: flex;
  align-items: center;
}
.picked {
  gap: 11px;
  width: 164px;
  height: 50px;
  padding-left: 10px;
  border-radius: 2px;
  background: #0996da;
  color: #fff;
  font-size: 22px;
  font-weight: bold;
  white-space: nowrap;
}
.clear {
  margin-left: 19px;
}
.drop {
  position: relative;
  width: 220px;
}
.drop select {
  width: 220px;
  height: 50px;
  padding-left: 43px;
  border: 2px solid #ccc;
  border-radius: 0;
  background: #fff;
  color: #333;
  font: inherit;
  appearance: none;
}
.drop-icon {
  position: absolute;
  left: 5px;
  width: 32px;
  height: 32px;
}
.drop .caret {
  position: absolute;
  right: 1px;
}
#thickness {
  width: 188px;
  height: 38px;
  margin: 0 4px 0 9px;
  padding: 0 5px;
  border: 2px solid #ccc;
  color: #333;
  font: inherit;
}
.flip {
  margin-left: 6px;
}
.check {
  position: relative;
  width: 26px;
  height: 26px;
  margin-left: 8px;
}
.check input {
  width: 26px;
  height: 26px;
  margin: 0;
  border: 2px solid #444;
  border-radius: 5px;
  background: linear-gradient(#c4c4c4, #eee);
  appearance: none;
}
.check svg {
  position: absolute;
  top: 0;
  left: 0;
  width: 26px;
  height: 26px;
  pointer-events: none;
}
.dialog-foot {
  display: flex;
  align-items: center;
  gap: 12px;
  height: 71px;
  padding: 0 9px 0 16px;
  border-top: 2px solid #ccc;
}
.info {
  width: 24px;
  height: 24px;
  margin-right: auto;
  border-radius: 50%;
  background: #000;
  color: #fff;
  font: bold 20px/24px "Liberation Serif", serif;
  text-align: center;
}
.dialog-foot button {
  justify-content: center;
  width: 120px;
  height: 38px;
  border: 2px solid #bbb;
  background: #e8e8e8;
  color: #666;
  font-size: 24px;
}

/* bottom row */
.bottom {
  display: grid;
  grid-template-columns: 1fr auto 1fr;
  align-items: center;
  margin-top: auto;
}
.comments {
  width: 599px;
  margin-left: 8px;
  padding-left: 28px;
}
.navbar {
  display: flex;
  align-items: center;
  height: 48px;
  padding: 0 2px 0 7px;
  background: #f1f1f1;
}
.navbar button {
  gap: 9px;
  margin-right: 20px;
}
.navbar button:first-child {
  margin-right: 6px;
}
.navbar .nav-fit {
  gap: 10px;
  margin-right: 22px;
}
.navbar .tight {
  gap: 4px;
  margin-right: 8px;
}
.navbar .tight:last-child {
  margin-right: 0;
}
.hint {
  padding: 0 68px 2px 0;
  font-weight: bold;
  text-align: right;
}

/* things floating over the canvas */
.viewcube {
  position: absolute;
  top: 52px;
  right: 30px;
  width: 160px;
  height: 160px;
}
.viewcube rect:first-child {
  filter: drop-shadow(0 2px 8px rgba(0, 0, 0, .2));
}
.cube-face {
  fill: #9da0a6;
  font-size: 23px;
  font-weight: bold;
  text-anchor: middle;
}
.axis {
  font-family: "Liberation Sans", sans-serif;
  font-size: 26px;
  stroke-width: 1px;
}
.axis-x {
  fill: #ff8a8a;
  stroke: #ff8a8a;
}
.axis-y {
  fill: #84ff84;
  stroke: #84ff84;
}
.axis-z {
  fill: #8686ff;
  stroke: #8686ff;
}
.tooltip {
  position: absolute;
  top: 408px;
  left: 693px;
  height: 37px;
  padding: 0 4px;
  border: 2px solid #aaa;
  background: #ececec;
  box-shadow: 0 8px 20px rgba(0, 0, 0, .35);
  color: #000;
  font-family: Inter, sans-serif;
  font-size: 26px;
  white-space: nowrap;
}
.value-box {
  position: absolute;
  top: 710px;
  left: 812px;
  display: flex;
  align-items: center;
  width: 224px;
  height: 44px;
  background: #f1f1f1;
}
.value-grip {
  width: 6px;
  height: 44px;
  margin-left: 8px;
  background: repeating-linear-gradient(#ccc 0 3px, transparent 3px 6px);
}
.value-box input {
  width: 154px;
  height: 40px;
  margin: 0 7px 0 31px;
  border: 4px solid #96c1f2;
  border-radius: 4px;
  background: linear-gradient(#b3d7ff, #b3d7ff) center / 78px 26px no-repeat #fff;
  color: #000;
  font: 25px Inter, sans-serif;
  text-align: center;
}

/* timeline */
.timeline {
  display: flex;
  align-items: center;
  height: 100px;
  padding: 0 8px 0 20px;
  border-top: 2px solid #ccc;
  background: #f1f1f1;
}
.playback {
  display: flex;
  gap: 22px;
}
.playback svg {
  width: 28px;
  height: 32px;
}
.steps {
  position: relative;
  display: flex;
  gap: 16px;
  margin: 14px 0 0 44px;
  padding-bottom: 4px;
}
.steps li::after {
  content: "";
  display: block;
  width: 4px;
  height: 10px;
  margin: 6px auto 0;
  background: #ccc;
}
.steps::after {
  content: "";
  position: absolute;
  right: 14px;
  bottom: 0;
  left: 14px;
  height: 4px;
  background: #ccc;
}
.marker {
  width: 24px;
  height: 64px;
  margin: 2px 0 0 -4px;
}
.settings {
  margin-left: auto;
}
```
